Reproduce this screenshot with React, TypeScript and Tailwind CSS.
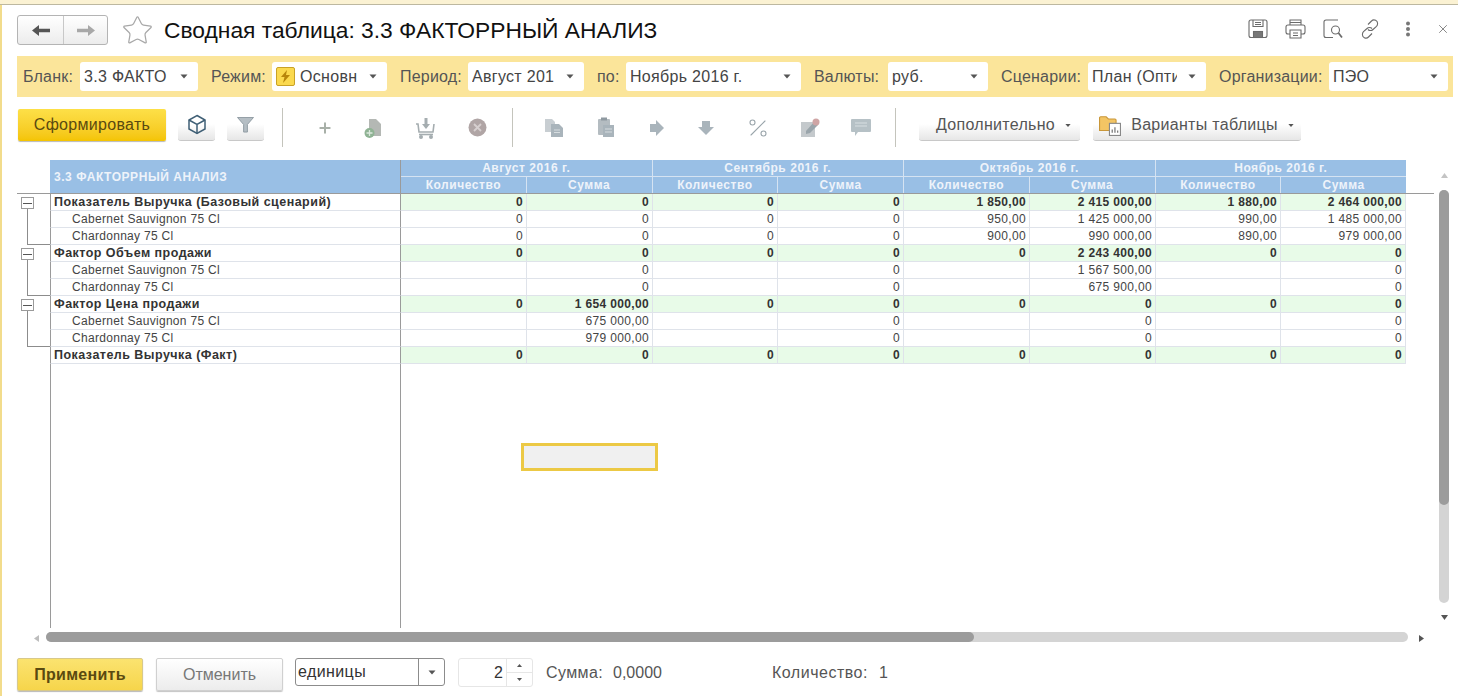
import React from 'react';
import { Star, X, Plus, Percent } from 'lucide-react';

const font = 'font-["Liberation_Sans",Arial,sans-serif]';

const Caret = ({ className = '' }: { className?: string }) => (
  <svg width="8" height="5" viewBox="0 0 8 5" className={className}>
    <path d="M0.5 0.5h7L4 4.5z" fill="#555" />
  </svg>
);

const Field = ({ label, value, labelW, width, icon }: { label: string; value: string; labelW: string; width: string; icon?: boolean }) => (
  <div className="flex items-center">
    <span className={`text-[16px] tracking-[0.2px] text-[#555] ${labelW}`}>{label}</span>
    <div className={`flex h-[29px] items-center rounded-[3px] bg-white pl-[4px] pr-[10px] ${width}`}>
      {icon && (
        <span className="mr-[5px] flex h-[19px] w-[19px] shrink-0 items-center justify-center rounded-[2px] border border-[#c9a227] bg-[#fbd94e]">
          <svg width="11" height="13" viewBox="0 0 11 13"><path d="M7 0 1 7h3.5L3 13l7-8H6z" fill="#b8860b" /></svg>
        </span>
      )}
      <span className="min-w-0 flex-1 overflow-hidden whitespace-nowrap text-[16px] tracking-[0.3px] text-[#444]">{value}</span>
      <Caret className="ml-[11px] shrink-0" />
    </div>
  </div>
);

const GrayBtn = ({ children, className = '' }: { children: React.ReactNode; className?: string }) => (
  <div className={`mt-px flex h-[33px] items-center self-start rounded-b-[3px] border-b border-[#c8c8c8] bg-gradient-to-b from-white via-white to-[#e6e6e6] ${className}`}>{children}</div>
);

const Sep = () => <div className="h-[39px] w-px shrink-0 bg-[#c4c4bc]" />;

// серые иконки панели
const ic = '#a9b4bb';
const NavArrow = ({ color, flip }: { color: string; flip?: boolean }) => (
  <svg width="18" height="11" viewBox="0 0 18 11" className={flip ? '-scale-x-100' : ''}>
    <path d="M0 5.5 7 0v3.800h11v3.400H7V11z" fill={color} />
  </svg>
);
const DocPlus = () => (
  <svg width="20" height="22" viewBox="0 0 20 22">
    <path d="M6 2h7l5 5v12H6z" fill="#b4b8b4" />
    <circle cx="6.5" cy="16" r="5" fill="#8fb394" />
    <path d="M6.5 13v6M3.5 16h6" stroke="#dce8dd" strokeWidth="1.3" />
  </svg>
);
const Cart = () => (
  <svg width="22" height="22" viewBox="0 0 22 22" fill="none" stroke="#a5adb0" strokeWidth="1.6">
    <path d="M1 7h2l1 8h14l1-8" />
    <path d="M4 17.5h14" />
    <circle cx="6" cy="20" r="1.2" fill="#a5adb0" />
    <circle cx="16" cy="20" r="1.2" fill="#a5adb0" />
    <path d="M11 1v7" strokeWidth="3" />
    <path d="M7 7l4 5 4-5z" fill="#a5adb0" stroke="none" />
  </svg>
);
const Stop = () => (
  <svg width="19" height="19" viewBox="0 0 19 19">
    <circle cx="9.5" cy="9.5" r="9" fill="#b0a5a5" />
    <path d="M6 6l7 7M13 6l-7 7" stroke="#d6cfcf" strokeWidth="1.8" />
  </svg>
);
const Copy = () => (
  <svg width="20" height="20" viewBox="0 0 20 20">
    <path d="M1 1h7l3 3v10H1z" fill="#c8ced2" />
    <path d="M7 6h8l4 4v9H7z" fill="#a9b4bb" />
    <path d="M10 12h6M10 14.5h6" stroke="#d6dcdf" />
  </svg>
);
const Paste = () => (
  <svg width="18" height="21" viewBox="0 0 18 21">
    <rect x="1" y="2" width="12" height="16" rx="1" fill="#b4bcc1" />
    <rect x="4" y="0.5" width="6" height="3" fill="#8f9aa1" />
    <path d="M6 8h11v12H6z" fill="#a9b4bb" />
    <path d="M8 12h7M8 15h7" stroke="#d6dcdf" />
  </svg>
);
const ArrowR = () => (
  <svg width="16" height="16" viewBox="0 0 16 16"><path d="M1 4h6V0l8 8-8 8v-4H1z" fill={ic} /></svg>
);
const ArrowD = () => (
  <svg width="16" height="14" viewBox="0 0 16 14"><path d="M4 0h8v6h4l-8 8-8-8h4z" fill={ic} /></svg>
);
const EditDoc = () => (
  <svg width="20" height="20" viewBox="0 0 20 20">
    <rect x="1" y="4" width="14" height="15" fill="#c4c9cc" />
    <path d="M6 13 14 4l4 3-8 8-4 1z" fill="#9aa5ab" />
    <circle cx="16" cy="4" r="3.500" fill="#cfa5a5" />
  </svg>
);
const Comment = () => (
  <svg width="20" height="18" viewBox="0 0 20 18">
    <path d="M1 0h18a1 1 0 0 1 1 1v11a1 1 0 0 1-1 1H7l-3 4v-4H1a1 1 0 0 1-1-1V1a1 1 0 0 1 1-1z" fill="#b6c1c6" />
    <path d="M4 4h12M4 7h12" stroke="#d8dfe2" />
  </svg>
);

const H = '#6b6b6b';
const SaveIcon = () => (
  <svg width="20" height="20" viewBox="0 0 20 20" fill="none" stroke={H} strokeWidth="1.1">
    <rect x="1" y="1" width="18" height="17.5" rx="2" />
    <path d="M5 1v6.5h10V1M7 3.5h6M7 5.5h6" />
    <rect x="5.5" y="12.5" width="9" height="6" fill="#777" />
  </svg>
);
const PrintIcon = () => (
  <svg width="21" height="20" viewBox="0 0 21 20" fill="none" stroke={H} strokeWidth="1.1">
    <path d="M5 6V1h11v5M5 3.5h11" />
    <rect x="1" y="6" width="19" height="9" rx="2" />
    <path d="M5 11h11v8H5zM8 14h5M8 16.5h5" fill="#fff" />
  </svg>
);
const PreviewIcon = () => (
  <svg width="20" height="20" viewBox="0 0 20 20" fill="none" stroke={H} strokeWidth="1.1">
    <path d="M10 18.5H3a2 2 0 0 1-2-2V3a2 2 0 0 1 2-2h12" />
    <circle cx="12.5" cy="11" r="4" />
    <path d="M15.5 14l3.5 4.5" strokeWidth="1.8" />
  </svg>
);
const LinkIcon = () => (
  <svg width="20" height="20" viewBox="0 0 20 20" fill="none" stroke={H} strokeWidth="1.1">
    <path d="M8 5.5 11.5 2a3.5 3.5 0 0 1 6 3c0 1-.5 1.800-1 2.300L13 10.500a3.500 3.500 0 0 1-5 0" />
    <path d="M12 14.500 8.500 18a3.500 3.500 0 0 1-6-3c0-1 .5-1.800 1-2.300L7 9.500a3.500 3.500 0 0 1 5 0" />
  </svg>
);

const headerCell = 'flex items-center justify-center text-[12px] leading-[16px] font-bold tracking-[0.55px] text-[#eef3fa]';

type Row = { name: string; bold?: boolean; tree?: 'open' | 'line' | 'end'; v: string[] };

const rows: Row[] = [
  { name: 'Показатель Выручка (Базовый сценарий)', bold: true, tree: 'open', v: ['0', '0', '0', '0', '1 850,00', '2 415 000,00', '1 880,00', '2 464 000,00'] },
  { name: 'Cabernet Sauvignon 75 Cl', tree: 'line', v: ['0', '0', '0', '0', '950,00', '1 425 000,00', '990,00', '1 485 000,00'] },
  { name: 'Chardonnay 75 Cl', tree: 'end', v: ['0', '0', '0', '0', '900,00', '990 000,00', '890,00', '979 000,00'] },
  { name: 'Фактор Объем продажи', bold: true, tree: 'open', v: ['0', '0', '0', '0', '0', '2 243 400,00', '0', '0'] },
  { name: 'Cabernet Sauvignon 75 Cl', tree: 'line', v: ['', '0', '', '0', '', '1 567 500,00', '', '0'] },
  { name: 'Chardonnay 75 Cl', tree: 'end', v: ['', '0', '', '0', '', '675 900,00', '', '0'] },
  { name: 'Фактор Цена продажи', bold: true, tree: 'open', v: ['0', '1 654 000,00', '0', '0', '0', '0', '0', '0'] },
  { name: 'Cabernet Sauvignon 75 Cl', tree: 'line', v: ['', '675 000,00', '', '0', '', '0', '', '0'] },
  { name: 'Chardonnay 75 Cl', tree: 'end', v: ['', '979 000,00', '', '0', '', '0', '', '0'] },
  { name: 'Показатель Выручка (Факт)', bold: true, v: ['0', '0', '0', '0', '0', '0', '0', '0'] },
];

const months = ['Август 2016 г.', 'Сентябрь 2016 г.', 'Октябрь 2016 г.', 'Ноябрь 2016 г.'];

const Tree = ({ kind }: { kind?: Row['tree'] }) => (
  <div className="relative h-[17px] w-[33px] shrink-0">
    {kind === 'open' && (
      <>
        <div className="absolute left-[4px] top-[3px] flex h-[12px] w-[13px] items-center justify-center border border-[#9a9a9a] bg-white">
          <div className="h-px w-[9px] bg-[#555]" />
        </div>
        <div className="absolute left-[10px] top-[15px] h-[2px] w-px bg-[#8c8c8c]" />
      </>
    )}
    {(kind === 'line' || kind === 'end') && <div className="absolute left-[10px] top-0 h-[17px] w-px bg-[#8c8c8c]" />}
    {kind === 'end' && <div className="absolute bottom-0 left-[10px] h-px w-[23px] bg-[#8c8c8c]" />}
  </div>
);

const DataRow = ({ row }: { row: Row }) => (
  <div className="flex h-[17px]">
    <Tree kind={row.tree} />
    <div className={`flex w-[351px] shrink-0 items-center border-x border-x-[#9a9a9a] border-b border-b-[#dfe3ea] pt-px leading-[15px] ${row.bold ? 'pl-[3px] text-[12.5px] font-bold tracking-[0.47px] text-[#333]' : 'pl-[21px] text-[12px] tracking-[0.3px] text-[#444]'}`}>
      {row.name}
    </div>
    <div className={`grid w-[1005px] grid-cols-[126px_126px_125px_126px_126px_126px_125px_125px] grid-rows-[17px] ${row.bold ? 'bg-[#e8fbe8]' : ''}`}>
      {row.v.map((val, i) => (
        <div key={i} className={`flex items-center justify-end border-b border-r border-[#dfe3ea] pr-[3px] pt-px text-[12px] leading-[15px] tracking-[0.35px] ${row.bold ? 'font-bold text-[#333]' : 'text-[#444]'}`}>
          {val}
        </div>
      ))}
    </div>
  </div>
);

export default function App() {
  return (
    <div className={`flex h-[696px] w-[1458px] flex-col overflow-hidden bg-white ${font}`}>
      <div className="h-[5px] shrink-0 border-b border-[#bdb8a0] bg-[#fbf2d3]" />
      <div className="flex min-h-0 flex-1 border-l-2 border-[#f2dc8c] pl-[15px]">
        <div className="relative flex min-w-0 flex-1 flex-col">
          {/* заголовок */}
          <div className="flex h-[51px] shrink-0 items-start">
            <div className="mt-[10px] flex h-[30px] w-[91px] rounded-[3px] border border-[#b4b4b4] bg-gradient-to-b from-white to-[#ececec]">
              <div className="flex w-[46px] items-center justify-center border-r border-[#c8c8c8]">
                <NavArrow color="#555" />
              </div>
              <div className="flex flex-1 items-center justify-center">
                <NavArrow color="#a8a8a8" flip />
              </div>
            </div>
            <Star size={33} strokeWidth={0.9} className="ml-[13px] mt-[9px] text-[#a8a8a8]" />
            <h1 className="ml-[10px] mt-[13px] text-[22.8px] font-normal leading-[25px] text-[#111]">Сводная таблица: 3.3 ФАКТОРРНЫЙ АНАЛИЗ</h1>
            <div className="ml-auto mr-[8px] mt-[14px] flex items-center gap-[17px]">
              <SaveIcon />
              <PrintIcon />
              <PreviewIcon />
              <LinkIcon />
              <svg width="6" height="16" viewBox="0 0 6 16" className="ml-[8px]">
                <circle cx="3" cy="2.500" r="2" fill="#777" />
                <circle cx="3" cy="8" r="2" fill="#777" />
                <circle cx="3" cy="13.500" r="2" fill="#777" />
              </svg>
              <X size={14} strokeWidth={1.5} className="ml-[8px] text-[#777]" />
            </div>
          </div>

          {/* отборы */}
          <div className="flex h-[41px] w-[1436px] shrink-0 items-center gap-[13px] bg-[#fbe59a] pl-[6px]">
            <Field label="Бланк:" labelW="w-[57px]" value="3.3 ФАКТО" width="w-[118px]" />
            <Field label="Режим:" labelW="w-[61px]" value="Основн" width="w-[115px]" icon />
            <Field label="Период:" labelW="w-[68px]" value="Август 201" width="w-[116px]" />
            <Field label="по:" labelW="w-[29px]" value="Ноябрь 2016 г." width="w-[175px]" />
            <Field label="Валюты:" labelW="w-[74px]" value="руб." width="w-[100px]" />
            <Field label="Сценарии:" labelW="w-[87px]" value="План (Опти" width="w-[118px]" />
            <Field label="Организации:" labelW="w-[110px]" value="ПЭО" width="w-[119px]" />
          </div>

          {/* панель команд */}
          <div className="mt-[10px] flex h-[41px] shrink-0 items-center">
            <div className="ml-px mt-[2px] flex h-[32px] w-[148px] items-center justify-center self-start rounded-[2px] bg-gradient-to-b from-[#fde047] to-[#f4c400] text-[16px] tracking-[0.3px] text-[#5a4a10] shadow-[0_1px_1px_#b9b9b9]">
              Сформировать
            </div>
            <GrayBtn className="ml-[12px] w-[37px] justify-center">
              <svg width="20" height="21" viewBox="0 0 20 21" fill="none" stroke="#3f5f75" strokeWidth="1.500">
                <path d="M10 1.500 18 6v9l-8 4.500L2 15V6z" />
                <path d="M2 6l8 4.500L18 6M10 10.500v9" />
              </svg>
            </GrayBtn>
            <GrayBtn className="ml-[12px] w-[37px] justify-center pt-[2px]">
              <svg width="17" height="16" viewBox="0 0 18 17"><path d="M0.500 0.500h17L11 8v8H7V8z" fill="#b5bec4" stroke="#8e9aa1" /></svg>
            </GrayBtn>
            <div className="ml-[18px]"><Sep /></div>
            <div className="ml-[35px] flex w-[13px] justify-center"><Plus size={16} strokeWidth={3} className="shrink-0 text-[#a8b0a8]" /></div>
            <div className="ml-[32px]"><DocPlus /></div>
            <div className="ml-[32px]"><Cart /></div>
            <div className="ml-[31px]"><Stop /></div>
            <div className="ml-[25px]"><Sep /></div>
            <div className="ml-[31px]"><Copy /></div>
            <div className="ml-[33px]"><Paste /></div>
            <div className="ml-[34px]"><ArrowR /></div>
            <div className="ml-[33px]"><ArrowD /></div>
            <div className="ml-[32px]"><Percent size={24} strokeWidth={1.1} className="text-[#9aa5ab]" /></div>
            <div className="ml-[30px]"><EditDoc /></div>
            <div className="ml-[31px]"><Comment /></div>
            <div className="ml-[24px]"><Sep /></div>
            <GrayBtn className="ml-[23px] w-[161px] justify-center pl-[9px] pt-[2px] text-[16px] tracking-[0.3px] text-[#555]">
              Дополнительно
              <Caret className="ml-[9px] scale-75" />
            </GrayBtn>
            <GrayBtn className="ml-[13px] w-[208px] justify-center pt-[2px] text-[16px] tracking-[0.3px] text-[#555]">
              <svg width="22" height="22" viewBox="0 0 20 20" className="mr-[10px]">
                <path d="M0.500 3.500a1 1 0 0 1 1-1h5l2 2h6a1 1 0 0 1 1 1V15H0.500z" fill="#f3c564" stroke="#c9973a" />
                <rect x="9.500" y="8.500" width="10" height="11" fill="#fff" stroke="#888" />
                <path d="M12 17v-3M14.500 17v-5M17 17v-2" stroke="#666" />
              </svg>
              Варианты таблицы
              <Caret className="ml-[9px] scale-75" />
            </GrayBtn>
          </div>

          {/* таблица и полосы прокрутки */}
          <div className="relative mt-[12px] flex min-h-0 flex-1">
            <div className="flex w-[1417px] shrink-0 flex-col">
              <div className="flex h-[34px] shrink-0">
                <div className="w-[33px] shrink-0 border-b border-[#9a9a9a]" />
                <div className={`flex w-[351px] shrink-0 items-center border-b border-r border-[#9a9a9a] bg-[#99bfe5] pl-[4px] ${headerCell} !justify-start`}>
                  3.3 ФАКТОРРНЫЙ АНАЛИЗ
                </div>
                <div className="flex w-[1005px] shrink-0 border-b border-[#9a9a9a] bg-[#99bfe5]">
                  {months.map((m) => (
                    <div key={m} className="flex flex-1 flex-col border-r border-[#d5e3f2] last:border-r-0">
                      <div className={`h-[17px] border-b border-[#d5e3f2] ${headerCell}`}>{m}</div>
                      <div className="flex flex-1">
                        <div className={`flex-1 border-r border-[#d5e3f2] ${headerCell}`}>Количество</div>
                        <div className={`flex-1 ${headerCell}`}>Сумма</div>
                      </div>
                    </div>
                  ))}
                </div>
                <div className="mt-auto h-px w-[28px] bg-[#9a9a9a]" />
              </div>
              {rows.map((r, i) => (
                <DataRow key={i} row={r} />
              ))}
              <div className="ml-[33px] w-[351px] flex-1 border-x border-[#9a9a9a]" />
              {/* горизонтальная прокрутка */}
              <div className="flex h-[30px] shrink-0 items-start">
                <div className="ml-[12px] mt-[7px] flex w-[14px] justify-center">
                  <svg width="5" height="7" viewBox="0 0 5 7"><path d="M5 0v7L0 3.500z" fill="#bdbdbd" /></svg>
                </div>
                <div className="ml-[3px] mt-[4px] h-[10px] w-[1362px] rounded-full bg-[#d4d4d4]">
                  <div className="h-[10px] w-[928px] rounded-full bg-[#9c9c9c]" />
                </div>
                <div className="ml-[11px] mt-[7px]">
                  <svg width="5" height="7" viewBox="0 0 5 7"><path d="M0 0v7l5-3.500z" fill="#555" /></svg>
                </div>
              </div>
            </div>
            {/* вертикальная прокрутка */}
            <div className="ml-[5px] flex h-[468px] w-[10px] flex-col items-center">
              <svg width="7" height="5" viewBox="0 0 7 5" className="mt-[13px]"><path d="M0 5h7L3.500 0z" fill="#c4c4c4" /></svg>
              <div className="mt-[12px] h-[413px] w-[10px] shrink-0 rounded-full bg-[#d4d4d4]">
                <div className="h-[315px] w-[10px] rounded-full bg-[#9c9c9c]" />
              </div>
              <svg width="7" height="5" viewBox="0 0 7 5" className="mt-[12px] shrink-0"><path d="M0 0h7L3.500 5z" fill="#555" /></svg>
            </div>
            {/* выделенная ячейка */}
            <div className="absolute left-[504px] top-[283px] h-[28px] w-[137px] border-[3px] border-[#ecc945] bg-[#f0f0f0]" />
          </div>

          {/* подвал */}
          <div className="flex h-[38px] shrink-0 items-start">
            <div className="flex h-[33px] w-[126px] items-center justify-center rounded-[2px] border border-[#d8c98a] bg-gradient-to-b from-[#fbe36f] to-[#f6d54a] text-[16px] font-bold tracking-[0.3px] text-[#5a4a10] shadow-[0_1px_1px_#b9b9b9]">
              Применить
            </div>
            <div className="ml-[13px] flex h-[33px] w-[127px] items-center justify-center rounded-[2px] border border-[#d0d0d0] bg-gradient-to-b from-white to-[#ececec] text-[16px] text-[#777] shadow-[0_1px_1px_#c4c4c4]">
              Отменить
            </div>
            <div className="ml-[12px] flex h-[28px] w-[150px] rounded-[3px] border border-[#8c8c8c] bg-white">
              <div className="flex flex-1 items-center pl-[2px] text-[16px] tracking-[0.4px] text-[#333]">единицы</div>
              <div className="flex w-[26px] items-center justify-center border-l border-[#8c8c8c]">
                <Caret />
              </div>
            </div>
            <div className="ml-[13px] flex h-[29px] w-[75px] rounded-[3px] border border-[#e6e6e6] bg-white">
              <div className="flex flex-1 items-center justify-end pr-[3px] text-[16px] text-[#333]">2</div>
              <div className="flex w-[26px] flex-col border-l border-[#e6e6e6]">
                <div className="flex flex-1 items-center justify-center border-b border-[#e6e6e6]">
                  <svg width="5" height="3" viewBox="0 0 5 3"><path d="M0 3h5L2.500 0z" fill="#555" /></svg>
                </div>
                <div className="flex flex-1 items-center justify-center">
                  <svg width="5" height="3" viewBox="0 0 5 3"><path d="M0 0h5L2.500 3z" fill="#555" /></svg>
                </div>
              </div>
            </div>
            <div className="ml-[13px] flex h-[29px] items-center text-[16px] text-[#555]">
              <span className="w-[67px] tracking-[0.4px]">Сумма:</span>
              <span className="w-[159px]">0,0000</span>
              <span className="w-[107px] tracking-[0.5px]">Количество:</span>
              <span>1</span>
            </div>
          </div>
        </div>
      </div>
    </div>
  );
}
